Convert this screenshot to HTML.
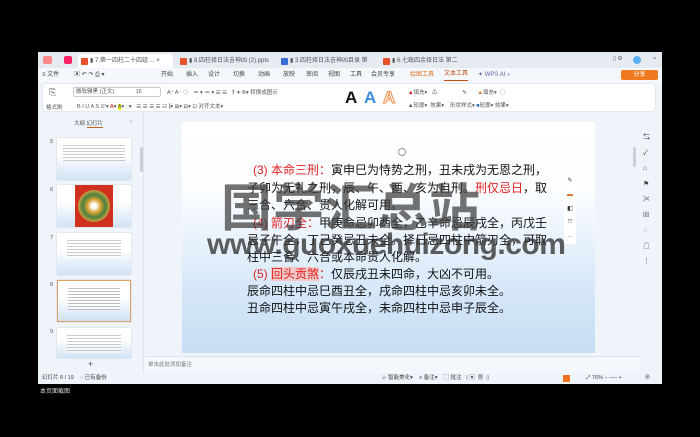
<!DOCTYPE html>
<html><head><meta charset="utf-8"><style>
*{margin:0;padding:0;box-sizing:border-box}
body{width:700px;height:437px;background:#000;position:relative;overflow:hidden;font-family:"Liberation Sans","Noto Sans CJK SC",sans-serif}
.a{position:absolute}
.win{left:38px;top:52px;width:624px;height:332px;background:#eef4fa;overflow:hidden}
.tabs{left:0;top:0;width:624px;height:16px;background:#e6ebf2}
.tab{top:2px;height:14px;background:#f7f9fc;border-radius:3px 3px 0 0;font-size:6px;color:#555;line-height:14px;padding-left:12px;white-space:nowrap}
.ico{display:inline-block;width:7px;height:7px;border-radius:1px;position:absolute;left:3px;top:3.5px}
.menu{left:0;top:16px;width:624px;height:14px;background:#f4f7fb;font-size:6px;color:#444;line-height:14px}
.tb{left:4px;top:31px;width:614px;height:29px;background:#fff;border-radius:4px;border:1px solid #e3e8ef}
.small{font-size:5.5px;color:#555}
.txt{position:absolute;font-size:12px;line-height:17px;color:#111;white-space:nowrap;font-family:"Liberation Sans","Noto Sans CJK SC",sans-serif}
.r{color:#e02020}
.thumb{left:19px;width:74px;height:42px;background:linear-gradient(#fff 40%,#cfe2f5);box-shadow:0 0 1px #bbb}
</style></head><body>
<div class="a win">
 <div class="a tabs">
  <div class="a" style="left:5px;top:4px;width:9px;height:8px;background:#f88;border-radius:2px"></div>
  <div class="a" style="left:26px;top:4px;width:8px;height:8px;background:#f26;border-radius:2px"></div>
  <div class="a tab" style="left:40px;width:95px;background:#fff"><span class="ico" style="background:#e8502a"></span>▮ 7.第一四柱二十四组 ...  ×</div>
  <div class="a tab" style="left:139px;width:98px;background:#e6ebf2"><span class="ico" style="background:#e8502a"></span>▮ 8.四柱择日法吉神凶 (2).pptx</div>
  <div class="a tab" style="left:240px;width:98px;background:#e6ebf2"><span class="ico" style="background:#3a6fd8"></span>▮ 3.四柱择日法吉神凶目录 第</div>
  <div class="a tab" style="left:342px;width:95px;background:#e6ebf2"><span class="ico" style="background:#e8502a"></span>▮ 6.七政四余择日法 第二</div>
  <div class="a small" style="left:575px;top:4px">▯ ⚙</div>
  <div class="a" style="left:595px;top:4px;width:8px;height:8px;border-radius:50%;background:#5ab0f0"></div>
  <div class="a small" style="left:615px;top:4px">×</div>
 </div>
 <div class="a menu">
  <span class="a" style="left:4px">≡ 文件</span>
  <span class="a" style="left:36px">▣ ↶ ↷ ⎙ ▾</span>
  <span class="a" style="left:123px">开始</span><span class="a" style="left:148px">插入</span><span class="a" style="left:170px">设计</span><span class="a" style="left:195px">切换</span><span class="a" style="left:220px">动画</span><span class="a" style="left:245px">放映</span><span class="a" style="left:268px">审阅</span><span class="a" style="left:290px">视图</span><span class="a" style="left:312px">工具</span><span class="a" style="left:333px">会员专享</span>
  <span class="a" style="left:372px;color:#e07020">绘图工具</span>
  <span class="a" style="left:406px;color:#c05010;border-bottom:1px solid #c05010;line-height:12px">文本工具</span>
  <span class="a" style="left:440px;color:#66a">✦ WPS AI  ⌕</span>
  <div class="a" style="left:583px;top:2px;width:37px;height:10px;background:#f07a20;border-radius:2px;color:#fff;line-height:10px;text-align:center">分享</div>
 </div>
 <div class="a tb">
  <div class="a small" style="left:6px;top:3px;font-size:9px">⎘</div>
  <div class="a small" style="left:3px;top:19px">格式刷</div>
  <div class="a" style="left:30px;top:3px;width:88px;height:10px;border:1px solid #ccc;border-radius:2px;font-size:5.5px;color:#555;padding-left:2px;line-height:9px">微软雅黑 (正文)&nbsp;&nbsp;&nbsp;&nbsp;&nbsp;&nbsp;&nbsp;&nbsp;&nbsp;&nbsp;&nbsp;&nbsp;&nbsp;&nbsp;16</div>
  <div class="a small" style="left:124px;top:4px">A⁺ A⁻ ◇ &nbsp; ≔ ▾ ≔ ▾ ☰ ☰ &nbsp; 扌▾ ⟰▾ 转换成图示</div>
  <div class="a small" style="left:34px;top:18px">B I U A S X²▾ <span style="color:#d00">A</span>▾ <span style="background:#ee0">A</span>▾ ◌▾ &nbsp; ☰ ☰ ☰ ☰ ☷ ⫿▾ ⊞▾ ⊟▾ ⊡ 对齐文本▾</div>
  <div class="a" style="left:302px;top:4px;font-size:17px;font-weight:bold;color:#111">A</div>
  <div class="a" style="left:321px;top:4px;font-size:17px;font-weight:bold;color:#3b8ee0">A</div>
  <div class="a" style="left:340px;top:4px;font-size:17px;font-weight:bold;color:#fff;-webkit-text-stroke:1px #f08a40">A</div>
  <div class="a small" style="left:365px;top:4px"><span style="color:#d00">▲</span>填充▾ &nbsp;&nbsp;⚠</div>
  <div class="a small" style="left:365px;top:17px">▲轮廓▾ &nbsp;效果▾</div>
  <div class="a small" style="left:407px;top:4px">&nbsp;&nbsp;&nbsp;&nbsp;&nbsp;&nbsp;&nbsp;&nbsp;✎ &nbsp;&nbsp;&nbsp;&nbsp;&nbsp;&nbsp;<span style="color:#e07020">▲</span>填充▾ &nbsp;◯</div>
  <div class="a small" style="left:407px;top:17px">形状样式▾ <span style="color:#37c">■</span>轮廓▾ 效果▾</div>
 </div>
 <div class="a" style="left:0;top:60px;width:106px;height:263px;background:#eef4fa;border-right:1px solid #dde4ec">
  <div class="a small" style="left:36px;top:7px">大纲 <span style="border-bottom:1px solid #c06020">幻灯片</span></div>
  <div class="a small" style="left:92px;top:7px">‹</div>
  <div class="a small" style="left:12px;top:27px">5</div>
  <div class="a thumb" style="top:26px"><div style="margin:5px 6px;height:18px;background:repeating-linear-gradient(#fff 0 2px,#aaa 2px 3px);opacity:.6"></div></div>
  <div class="a" style="left:102px;top:35px;width:3px;height:25px;background:#c8d0da;border-radius:2px"></div>
  <div class="a small" style="left:12px;top:75px">6</div>
  <div class="a thumb" style="top:73px"><div style="margin:0 auto;width:38px;height:42px;background:#d03020;position:relative"><div style="position:absolute;left:3px;top:5px;width:32px;height:32px;border-radius:50%;background:radial-gradient(#fff 10%,#d6a030 30%,#4a8040 50%,#c8a040 70%,#b08020)"></div></div></div>
  <div class="a small" style="left:12px;top:123px">7</div>
  <div class="a thumb" style="top:121px"><div style="margin:5px 10px;height:20px;background:repeating-linear-gradient(#fff 0 2px,#aaa 2px 3px);opacity:.6"></div></div>
  <div class="a small" style="left:12px;top:170px">8</div>
  <div class="a thumb" style="top:168px;border:1px solid #e0a060"><div style="margin:5px 10px;height:24px;background:repeating-linear-gradient(#fff 0 2px,#999 2px 3px);opacity:.6"></div></div>
  <div class="a small" style="left:12px;top:217px">9</div>
  <div class="a thumb" style="top:216px;height:30px"><div style="margin:5px 10px;height:20px;background:repeating-linear-gradient(#fff 0 2px,#aaa 2px 3px);opacity:.6"></div></div>
  <div class="a" style="left:50px;top:247px;font-size:9px;color:#555">+</div>
 </div>
 <div class="a" style="left:107px;top:60px;width:495px;height:244px;background:#eef4fa"></div>
 <div class="a" style="left:144px;top:70px;width:413px;height:231px;background:linear-gradient(#fff 0%,#fbfdff 30%,#d4e6f8 75%,#c8def5 100%)"></div>
 <div class="a" style="left:595px;top:95px;width:3px;height:20px;background:#c8d0da;border-radius:2px"></div>
 <div class="a" style="left:107px;top:304px;width:495px;height:17px;background:#f4f7fb;border-top:1px solid #dde4ec;font-size:5.5px;color:#777;line-height:17px;padding-left:3px">单击此处添加备注</div>
 <div class="a small" style="left:605px;top:78px;line-height:15.5px;color:#444;font-size:7px">⇆<br>✓<br>⌂<br>⚑<br>✂<br>☒<br>◌<br>☖<br>⋮</div>
 <div class="a" style="left:526px;top:122px;width:12px;height:68px;line-height:14px;font-size:6px;color:#333;text-align:center"><div style="background:#fff;border-radius:2px">✎</div><div style="background:#fff;color:#e07020">▬</div><div style="background:#fff">◧</div><div style="background:#fff">⤧</div><div style="background:#fff">··</div></div>
 <div class="a" style="left:0;top:321px;width:624px;height:11px;background:#eef4fa;font-size:5.5px;color:#444;line-height:11px">
  <span class="a" style="left:4px">幻灯片 8 / 19</span><span class="a" style="left:42px">◌ 已有备份</span>
  <span class="a" style="left:343px">☺ 智能美化▾ &nbsp;&nbsp;&nbsp;≡ 备注▾ &nbsp;&nbsp;&nbsp;▢ 批注 &nbsp; | ▣ &nbsp;▦ &nbsp;▯</span>
  <span class="a" style="left:525px;top:2px;width:7px;height:7px;background:#f07020"></span>
  <span class="a" style="left:548px">⤢ 76% − ── + &nbsp;&nbsp;&nbsp;&nbsp;&nbsp;&nbsp;&nbsp;&nbsp;&nbsp;&nbsp;&nbsp;&nbsp;&nbsp;&nbsp;⊕</span>
 </div>
</div>
<div class="a" style="left:40px;top:386px;font-size:6px;color:#ddd">本页面截图</div>
<div class="a" style="left:398px;top:148px;width:8px;height:8px;border-radius:50%;border:1.5px solid #999"></div>
<div class="txt" style="left:253px;top:162px"><span class="r">(3) 本命三刑：</span>寅申巳为恃势之刑，丑未戌为无恩之刑，</div>
<div class="txt" style="left:247px;top:180px">子卯为无礼之刑，辰、午、酉、亥为自刑。<span class="r">刑仅忌日</span>，取</div>
<div class="txt" style="left:247px;top:197px">三合、六合、贵人化解可用。</div>
<div class="txt" style="left:253px;top:215px"><span class="r">(4) 箭刃全：</span>甲庚命忌卯酉全，乙辛命忌辰戌全，丙戊壬</div>
<div class="txt" style="left:247px;top:232px">忌子午全，丁己癸忌丑未全。择日忌四柱中箭刃全，可取</div>
<div class="txt" style="left:247px;top:249px">柱中三合、六合或本命贵人化解。</div>
<div class="txt" style="left:253px;top:266px"><span class="r">(5) <span style="background:#f2c8c8">回头贡煞</span>：</span>仅辰戌丑未四命，大凶不可用。</div>
<div class="txt" style="left:247px;top:283px">辰命四柱中忌巳酉丑全，戌命四柱中忌亥卯未全。</div>
<div class="txt" style="left:247px;top:300px">丑命四柱中忌寅午戌全，未命四柱中忌申子辰全。</div>
<div class="a" style="left:221px;top:174px;font-size:51px;line-height:60px;font-weight:bold;color:rgba(60,60,60,.72);letter-spacing:1px;font-family:'Noto Sans CJK SC',sans-serif;white-space:nowrap">国学汇总站</div>
<div class="a" style="left:207px;top:228px;font-size:30px;line-height:34px;font-weight:bold;color:rgba(50,50,50,.78);white-space:nowrap;letter-spacing:-0.5px">www.guoxuehuizong.com</div>
</body></html>
